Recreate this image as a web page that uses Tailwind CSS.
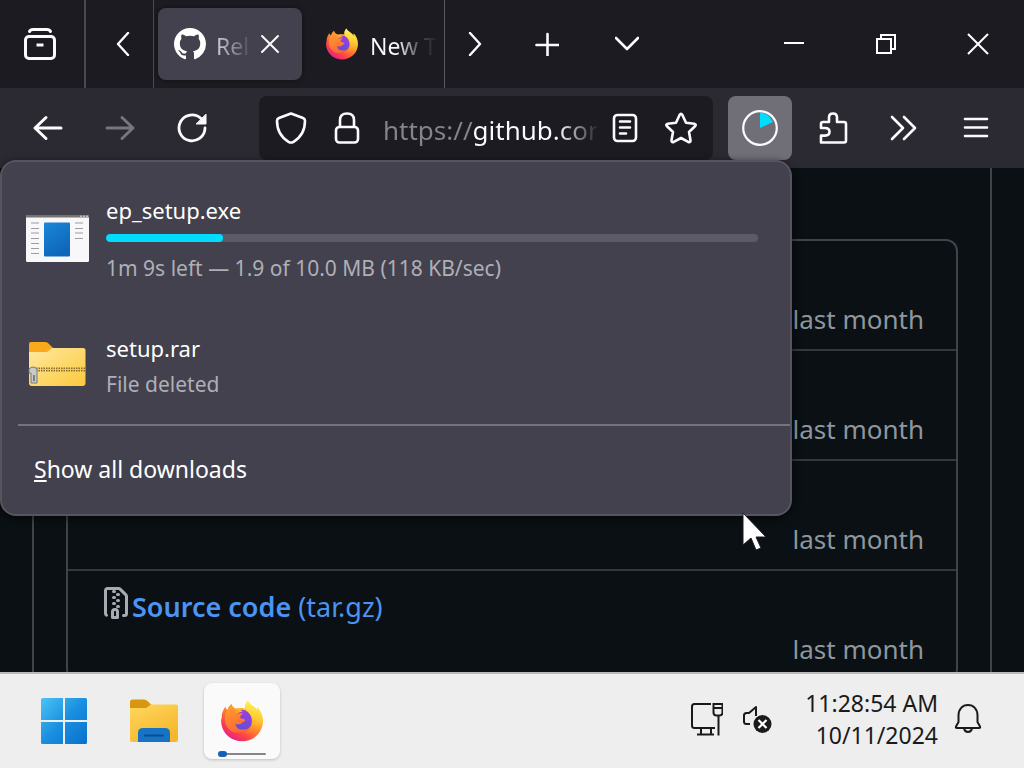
<!DOCTYPE html>
<html lang="en">
<head>
<meta charset="utf-8">
<meta name="viewport" content="width=device-width, initial-scale=1">
<title>Downloads</title>
<script src="https://cdn.jsdelivr.net/npm/@tailwindcss/browser@4"></script>
</head>
<body class="flex h-screen flex-col overflow-hidden bg-[#0a1013] font-['Noto_Sans','Open_Sans',sans-serif] text-white">

<!-- Shared logo symbol -->
<svg class="absolute size-0" aria-hidden="true">
  <defs>
    <linearGradient id="fxBody" x1="0.85" y1="0.1" x2="0.25" y2="0.95">
      <stop offset="0" stop-color="#fff04a"/><stop offset=".3" stop-color="#ffb52e"/><stop offset=".55" stop-color="#ff7a2a"/><stop offset=".8" stop-color="#fb3f4c"/><stop offset="1" stop-color="#e6218c"/>
    </linearGradient>
    <linearGradient id="fxFlame" x1="0.6" y1="0" x2="0.5" y2="1">
      <stop offset="0" stop-color="#fff35a"/><stop offset=".5" stop-color="#ffcf33"/><stop offset="1" stop-color="#ff8a2b" stop-opacity="0.2"/>
    </linearGradient>
    <linearGradient id="fxGlobe" x1="0.7" y1="0" x2="0.3" y2="1">
      <stop offset="0" stop-color="#a23ce0"/><stop offset=".5" stop-color="#7a47e0"/><stop offset="1" stop-color="#5f4fd0"/>
    </linearGradient>
    <linearGradient id="fxHead" x1="0.2" y1="0" x2="0.6" y2="1">
      <stop offset="0" stop-color="#ffa02e"/><stop offset="1" stop-color="#ff6436"/>
    </linearGradient>
    <symbol id="firefox" viewBox="0 0 64 64">
      <path fill="url(#fxBody)" d="M41 1c-4 4-5 8-4 12-4-1-9-1-13 0-4-1-7-3-8-7-3 2-5 6-6 9-2-1-3-3-3-5-4 5-6 11-6 17C0 30 0 34 1 39c3 14 16 24 31 24 18 0 32-14 32-31 0-9-4-17-9-21 0 2 1 4 1 6C52 9 44 8 41 1Z"/>
      <path fill="url(#fxFlame)" d="M41 1c-4 4-5 9-3 13 3 5 9 8 10 16 1 9-4 16-13 20 12 4 25-4 27-18 0-9-3-17-7-21 0 2 1 4 1 6C52 9 44 8 41 1Z"/>
      <path fill="url(#fxGlobe)" d="M20 32c0-8 6-14 13-14l-3-3c8-1 17 6 17 17 0 9-6 14-14 14s-13-6-13-14Z"/>
      <path fill="url(#fxHead)" d="M16 6c-3 2-5 6-6 10-3 3-4 8-4 14 0 10 8 19 18 20 6 0 12-2 15-6-8 3-16 0-17-8 4 2 8 1 10-1 2-2 5-2 5-4s-4-3-7-3c-2-2 0-5 4-7-4-1-7-1-10 1-2-1-4-1-6 0 1-2 3-4 5-5-4-2-6-6-7-11Z"/>
    </symbol>
  </defs>
</svg>

<!-- Tab strip -->
<header class="flex h-22 shrink-0 items-stretch bg-[#1c1b22]">
  <button class="flex w-20 items-center justify-center" aria-label="Recent browsing">
    <svg class="size-8" viewBox="0 0 32 32" fill="none" stroke="#fbfbfe" stroke-width="3" stroke-linecap="round" stroke-linejoin="round"><rect x="1.500" y="8.500" width="29" height="22" rx="3.500"/><path d="M5.500 3.500Q6.500 1.500 9 1.500h14q2.500 0 3.500 2"/><path d="M12.500 17h7" stroke-linecap="butt"/></svg>
  </button>
  <div class="ml-1 flex border-r border-l-2 border-[#4a4952]">
    <button class="flex w-[67px] items-center justify-center pl-1.5" aria-label="Scroll tabs left">
      <svg class="h-6 w-4" viewBox="0 0 16 24" fill="none" stroke="#fbfbfe" stroke-width="2.400" stroke-linecap="round" stroke-linejoin="round"><path d="M13 1 3 12l10 11"/></svg>
    </button>
  </div>
  <nav class="flex items-stretch border-r border-[#5a5962]" aria-label="Tabs">
    <div class="my-2 ml-1 flex w-36 items-center rounded-lg bg-[#42414d] pl-4 shadow-[0_0_4px_rgba(0,0,0,0.5)]">
      <svg class="size-8 shrink-0" viewBox="0 0 16 16" fill="#fff"><path d="M8 0C3.580 0 0 3.580 0 8c0 3.540 2.290 6.530 5.470 7.590.4.070.55-.17.55-.38 0-.19-.01-.82-.01-1.490-2.010.37-2.530-.49-2.690-.94-.09-.23-.48-.94-.82-1.130-.28-.15-.68-.52-.01-.53.63-.01 1.080.58 1.230.82.72 1.210 1.870.87 2.330.66.07-.52.28-.87.51-1.070-1.780-.2-3.640-.89-3.640-3.950 0-.87.31-1.590.82-2.150-.08-.2-.36-1.020.08-2.120 0 0 .67-.21 2.200.82.64-.18 1.320-.27 2-.27.68 0 1.360.09 2 .27 1.530-1.040 2.200-.82 2.200-.82.44 1.100.16 1.920.08 2.120.51.56.82 1.270.82 2.150 0 3.070-1.870 3.750-3.650 3.950.29.25.54.73.54 1.480 0 1.070-.01 1.930-.01 2.200 0 .21.15.46.55.38A8.013 8.013 0 0 0 16 8c0-4.420-3.580-8-8-8z"/></svg>
      <a href="#releases" class="ml-2.5 w-9 overflow-hidden bg-[linear-gradient(90deg,#d0d0d4,#6b6a75_75%,#42414d)] bg-clip-text pt-1 text-[23px] leading-8 whitespace-nowrap text-transparent">Releases</a>
      <button class="ml-1.5 flex size-6 items-center justify-center" aria-label="Close tab">
        <svg class="size-5" viewBox="0 0 20 20" stroke="#fbfbfe" stroke-width="2" stroke-linecap="round"><path d="m2 2 16 16M18 2 2 18"/></svg>
      </button>
    </div>
    <a href="#newtab" class="flex w-[142px] items-center pl-6">
      <svg class="size-8 shrink-0"><use href="#firefox"/></svg>
      <span class="ml-3 w-17 overflow-hidden bg-[linear-gradient(90deg,#fbfbfe_40%,#55545d_72%,#1c1b22)] bg-clip-text pt-1 text-[23px] leading-8 whitespace-nowrap text-transparent">New Tab</span>
    </a>
  </nav>
  <button class="flex w-15 items-center justify-center" aria-label="Scroll tabs right">
    <svg class="h-6 w-4" viewBox="0 0 16 24" fill="none" stroke="#fbfbfe" stroke-width="2.400" stroke-linecap="round" stroke-linejoin="round"><path d="m3 1 10 11L3 23"/></svg>
  </button>
  <button class="ml-0.5 flex w-20 items-center justify-center" aria-label="New tab">
    <svg class="size-6" viewBox="0 0 24 24" stroke="#fbfbfe" stroke-width="2.600" stroke-linecap="round"><path d="M1.500 13h22M12.500 2v22"/></svg>
  </button>
  <button class="flex w-20 items-center justify-center" aria-label="List all tabs">
    <svg class="h-4 w-6" viewBox="0 0 24 16" fill="none" stroke="#fbfbfe" stroke-width="2.600" stroke-linecap="round" stroke-linejoin="round"><path d="m1 2 11 11L23 2"/></svg>
  </button>
  <div class="ml-auto flex">
    <button class="flex w-23 items-center justify-center" aria-label="Minimize"><svg class="size-5" viewBox="0 0 20 20" stroke="#fff" stroke-width="2"><path d="M0 9h20"/></svg></button>
    <button class="flex w-23 items-center justify-center" aria-label="Restore"><svg class="size-5" viewBox="0 0 20 20" fill="none" stroke="#fff" stroke-width="2"><path d="M1 5h14v14H1zM5 5V1h14v14h-4"/></svg></button>
    <button class="flex w-23 items-center justify-center" aria-label="Close"><svg class="size-6" viewBox="0 0 24 24" stroke="#fff" stroke-width="2"><path d="m2 2 20 20M22 2 2 22"/></svg></button>
  </div>
</header>

<!-- Navigation toolbar -->
<div class="relative z-10 flex h-20 shrink-0 items-center bg-[#2b2a33] px-3">
  <button class="flex w-18 justify-center" aria-label="Back"><svg class="size-8" viewBox="0 0 32 32" fill="none" stroke="#fbfbfe" stroke-width="3" stroke-linecap="round" stroke-linejoin="round"><path d="M29 16H3M14 5.500 3 16l11 10.500"/></svg></button>
  <button class="flex w-18 justify-center" aria-label="Forward" disabled><svg class="size-8" viewBox="0 0 32 32" fill="none" stroke="#77767e" stroke-width="3" stroke-linecap="round" stroke-linejoin="round"><path d="M3 16h26M18 5.500 29 16 18 26.500"/></svg></button>
  <button class="flex w-18 justify-center" aria-label="Reload"><svg class="size-8" viewBox="0 0 32 32" fill="none" stroke="#fbfbfe" stroke-width="2.800" stroke-linecap="round"><path d="M29 16A13 13 0 1 1 25 6.500"/><path d="M30 2.500V12h-9.500z" fill="#fbfbfe" stroke-width="1" stroke-linejoin="round"/></svg></button>
  <div class="mr-[11px] ml-[31px] flex h-16 min-w-0 flex-1 items-center rounded-lg bg-[#1c1b22] px-1">
    <button class="flex w-14 shrink-0 justify-center" aria-label="Tracking protection"><svg class="size-8" viewBox="0 0 32 32" fill="none" stroke="#fbfbfe" stroke-width="2.600" stroke-linejoin="round"><path d="M16 1.500 28 6q2 .8 2 2.800c0 9.700-3.500 16.200-11.500 21q-2.500 1.500-5 0C5.500 25 2 18.500 2 8.800Q2 6.800 4 6Z"/></svg></button>
    <button class="flex w-14 shrink-0 justify-center" aria-label="Connection secure"><svg class="size-8" viewBox="0 0 32 32" fill="none" stroke="#fbfbfe" stroke-width="2.600"><rect x="5" y="15" width="22" height="15.500" rx="3.500"/><path d="M9 15V8q0-6.500 7-6.500T23 8v7"/></svg></button>
    <input type="text" aria-label="Address" value="https://github.com/valinet/ExplorerPatcher/releases" class="ml-2 min-w-0 flex-1 bg-[linear-gradient(90deg,#85848b_90px,#fbfbfe_90px,#fbfbfe_175px,#1c1b22_216px)] bg-clip-text pt-1 text-[26px] leading-9 text-transparent outline-none">
    <button class="flex w-14 shrink-0 justify-center" aria-label="Reader view"><svg class="size-8" viewBox="0 0 32 32" fill="none" stroke="#fbfbfe" stroke-width="2.600" stroke-linecap="round"><rect x="5" y="3" width="22" height="26" rx="3.500"/><path d="M11 9.500h10M11 15.500h10M11 21.500h6"/></svg></button>
    <button class="flex w-14 shrink-0 justify-center" aria-label="Bookmark this page"><svg class="size-8" viewBox="0 0 32 32" fill="none" stroke="#fbfbfe" stroke-width="2.600" stroke-linejoin="round"><path d="M14.600 3q1.400-2.400 2.800 0l3.600 7.800 8.200 1q2.500.6.8 2.500L24 20l1.500 8.200q.1 2.500-2.300 1.700L16 26l-7.200 3.900q-2.400.8-2.300-1.700L8 20l-6-5.700q-1.700-1.900.8-2.500l8.200-1Z"/></svg></button>
  </div>
  <button class="mx-1 flex size-16 items-center justify-center rounded-lg bg-[#706f78]" aria-label="Downloads"><svg class="size-9" viewBox="0 0 36 36"><path d="M18 18V2.500q8 0 13 9.500Z" fill="#00ddff"/><circle cx="18" cy="18" r="16.800" fill="none" stroke="#fbfbfe" stroke-width="2.200"/></svg></button>
  <button class="flex w-18 justify-center" aria-label="Extensions"><svg class="size-8" viewBox="0 0 32 32" fill="none" stroke="#fbfbfe" stroke-width="2.600" stroke-linejoin="round"><path d="M5 30.500h23q2 0 2-2V12q0-2-2-2h-7V5.500q0-4-4-4t-4 4V10H7q-2 0-2 2v4h4q4.500 0 4.500 3.800T9 23.600H5Z"/></svg></button>
  <button class="flex w-18 justify-center" aria-label="More tools"><svg class="size-8" viewBox="0 0 32 32" fill="none" stroke="#fbfbfe" stroke-width="2.600" stroke-linecap="round" stroke-linejoin="round"><path d="m4 5 11 11L4 27M16 5l11 11-11 11"/></svg></button>
  <button class="flex w-18 justify-center" aria-label="Application menu"><svg class="size-8" viewBox="0 0 32 32" stroke="#fbfbfe" stroke-width="2.600" stroke-linecap="round"><path d="M5 7h22M5 15.500h22M5 24h22"/></svg></button>

  <!-- Downloads panel -->
  <section class="absolute top-18 left-0 w-[calc(100%-232px)] rounded-2xl border-2 border-[#56555f] bg-[#42414d] pb-0.5 shadow-[0_2px_8px_rgba(0,0,0,0.6)]" aria-label="Downloads">
    <ul class="mt-8 mr-8 mb-6 ml-6 flex flex-col gap-12">
      <li class="flex items-center gap-4">
        <svg class="h-12 w-16 shrink-0" viewBox="1 1 64 48"><defs><linearGradient id="exe" x1="0" y1="0" x2="0.5" y2="1"><stop offset="0" stop-color="#1a86d9"/><stop offset="1" stop-color="#0f66b8"/></linearGradient></defs><rect x="1" y="1" width="63" height="47" rx="1.500" fill="#f8f8fa"/><path d="M1 1h63v2.500H1z" fill="#77736f"/><path d="M55 2.200h8" stroke="#ddd" stroke-width="1" stroke-dasharray="2 1"/><rect x="19" y="8.500" width="26" height="34" rx="1" fill="url(#exe)"/><path d="M6 9h8M6 14.500h8M6 19h8M6 24.500h8M6 29.500h8M6 34.500h8M6 39.500h8M50 9h8M50 14.500h8M50 19h8M50 24.500h8" stroke="#9b9ba0" stroke-width="1.200"/></svg>
        <div class="min-w-0 flex-1">
          <p class="text-[22px] leading-8">ep_setup.exe</p>
          <div class="mt-2 mb-2.5 h-2 overflow-hidden rounded-full bg-[#5b5a66]" role="progressbar" aria-label="ep_setup.exe" aria-valuenow="18" aria-valuemin="0" aria-valuemax="100"><div class="h-full rounded-full bg-[#00ddff]" style="width:18%"></div></div>
          <p class="text-[21px] leading-8 text-[#afafb6]">1m 9s left — 1.9 of 10.0 MB (118 KB/sec)</p>
        </div>
      </li>
      <li class="flex items-center gap-4">
        <svg class="size-16 shrink-0" viewBox="1 2 64 64"><defs><linearGradient id="zip" x1="0" y1="0" x2="1" y2="1"><stop offset="0" stop-color="#ffe9a0"/><stop offset="1" stop-color="#fbc93c"/></linearGradient></defs><path d="M4 12q0-2 2-2h14q2 0 3 1l5 5v6H4Z" fill="#f8a91c"/><path d="M4 20h18l5-4h31q2.500 0 2.500 2.500V51q0 3-3 3H7q-3 0-3-3Z" fill="url(#zip)"/><path d="M11 37.500h49" stroke="#8a6a28" stroke-width="4" stroke-dasharray="1.500 1"/><path d="M11 37.500h49" stroke="#d9c690" stroke-width="1"/><path d="M4 37q4-4 8 0v14H6V41H4Z" fill="#c9c9c9" stroke="#777" stroke-width="1"/><path d="M9 43v6" stroke="#666" stroke-width="1.500"/></svg>
        <div class="min-w-0 flex-1">
          <p class="text-[22px] leading-8">setup.rar</p>
          <p class="mt-1 text-[21px] leading-8 text-[#afafb6]">File deleted</p>
        </div>
      </li>
    </ul>
    <hr class="ml-4 border-t-2 border-[#73727e]">
    <button class="flex h-[86px] w-full items-center pl-8 text-[23px]"><span><span class="underline decoration-2 underline-offset-2">S</span>how all downloads</span></button>
  </section>

  <!-- Mouse pointer -->
  <svg class="pointer-events-none absolute top-[424px] left-[742px] h-10 w-6" viewBox="0 0 24 40" aria-hidden="true"><path d="M1 1v32l8-7 5 12 5-2-5-11h10Z" fill="#fff" stroke="#1c1b22" stroke-width="1"/></svg>
</div>

<!-- Release assets page -->
<main class="min-h-0 flex-1 overflow-hidden">
  <div class="mx-8 border-x-2 border-[#3d444d] px-8 pt-[71px] pb-8 text-[26px] leading-9">
    <ul class="divide-y-2 divide-[#33393f] rounded-xl border-2 border-[#3d444d] text-[#8f969e]">
      <li class="flex h-[110px] items-end justify-end px-8 pb-3"><time>last month</time></li>
      <li class="flex h-[110px] items-end justify-end px-8 pb-3"><time>last month</time></li>
      <li class="flex h-[110px] items-end justify-end px-8 pb-3"><time>last month</time></li>
      <li class="flex h-[108px] flex-col justify-between px-8 pt-4 pb-3">
        <a href="#source" class="flex items-start self-start text-[27px] leading-10 text-[#4c93f2]">
          <svg class="size-8" viewBox="0 0 16 16" fill="#a5acb3"><path d="M3.500 1.750v11.500c0 .09.048.173.126.217a.75.75 0 0 1-.752 1.298A1.748 1.748 0 0 1 2 13.250V1.750C2 .784 2.784 0 3.750 0h5.586c.464 0 .909.185 1.237.513l2.914 2.914c.329.328.513.773.513 1.237v8.586A1.750 1.750 0 0 1 12.250 15h-.5a.75.75 0 0 1 0-1.500h.5a.25.25 0 0 0 .25-.25V4.664a.25.25 0 0 0-.073-.177L9.513 1.573a.25.25 0 0 0-.177-.073H7.250a.75.75 0 0 1 0 1.500h-.5a.75.75 0 0 1 0-1.500h-3a.25.25 0 0 0-.25.25Zm3.750 8.750h.5c.966 0 1.750.784 1.750 1.750v3a.75.75 0 0 1-.75.75h-2.500a.75.75 0 0 1-.75-.75v-3c0-.966.784-1.750 1.750-1.750ZM6 5.250a.75.75 0 0 1 .75-.75h.5a.75.75 0 0 1 0 1.500h-.5A.75.75 0 0 1 6 5.250Zm.75 2.250h.5a.75.75 0 0 1 0 1.500h-.5a.75.75 0 0 1 0-1.500ZM8 6.750A.75.75 0 0 1 8.750 6h.5a.75.75 0 0 1 0 1.500h-.5A.75.75 0 0 1 8 6.750ZM8.750 3h.5a.75.75 0 0 1 0 1.500h-.5a.75.75 0 0 1 0-1.500ZM8 9.750A.75.75 0 0 1 8.750 9h.5a.75.75 0 0 1 0 1.500h-.5A.75.75 0 0 1 8 9.750Zm-1 2.500v2.250h1v-2.250a.25.25 0 0 0-.25-.25h-.5a.25.25 0 0 0-.25.25Z"/></svg>
          <span><span class="font-semibold">Source code</span> (tar.gz)</span>
        </a>
        <time class="self-end">last month</time>
      </li>
    </ul>
  </div>
</main>

<!-- Taskbar -->
<footer class="relative flex h-24 shrink-0 items-center border-t-2 border-[#b9bab9] bg-[#eeeeee] text-[#1a1a1a]">
  <button class="ml-[26px] flex size-19 items-center justify-center" aria-label="Start"><svg class="size-[46px]" viewBox="0 0 46 46"><defs><linearGradient id="win" gradientUnits="userSpaceOnUse" x1="0" y1="0" x2="46" y2="46"><stop offset="0" stop-color="#4cc3f5"/><stop offset=".5" stop-color="#1a8fe0"/><stop offset="1" stop-color="#0a6fca"/></linearGradient></defs><path fill="url(#win)" d="M1.500 0H22v22H0V1.500Q0 0 1.500 0ZM24 0h20.500Q46 0 46 1.500V22H24ZM0 24h22v22H1.500Q0 46 0 44.500ZM24 24h22v20.500q0 1.500-1.500 1.500H24Z"/></svg></button>
  <button class="ml-[14px] flex size-19 items-center justify-center" aria-label="File Explorer"><svg class="size-12" viewBox="0 0 48 48"><defs><linearGradient id="fold" x1="0" y1="0" x2="0.6" y2="1"><stop offset="0" stop-color="#ffd75e"/><stop offset="1" stop-color="#f5b72c"/></linearGradient></defs><path d="M0 5q0-2.500 2.500-2.500H14q2 0 3.500 1.500l4 4v6H0Z" fill="#d9960f"/><path d="M0 11h16l5-3.500h25q2 0 2 2V43q0 2-2 2H2q-2 0-2-2Z" fill="url(#fold)"/><path d="M8 45V36q0-5 5-5h22q5 0 5 5v9Z" fill="#1773c4"/><path d="M15 38.500h18" stroke="#0b4f8e" stroke-width="2" stroke-linecap="round"/></svg></button>
  <button class="relative ml-3 flex size-19 items-center justify-center rounded-lg bg-[#fafafa] shadow-[0_1px_3px_rgba(0,0,0,0.2)]" aria-label="Firefox">
    <svg class="size-[42px]"><use href="#firefox"/></svg>
    <span class="absolute bottom-1 left-4 h-[2px] w-[46px] rounded-full bg-[#85858a]"></span>
    <span class="absolute bottom-[2px] left-[14px] h-[6px] w-[9px] rounded-full bg-[#1560b3]"></span>
  </button>
  <div class="mr-[42px] mb-1 ml-auto flex items-center">
    <button aria-label="Network"><svg class="h-9 w-8" viewBox="0 0 32 36" fill="none" stroke="#1a1a1a" stroke-width="2"><path d="M20 3H3.500Q1 3 1 5.500v19Q1 27 3.500 27H24M10 27v6M20 27v6M6 33.500h17M27.500 15v19.500"/><path d="M22.500 3h9v8.500q0 3-3 3h-3q-3 0-3-3ZM22.500 7h9"/></svg></button>
    <button class="ml-5" aria-label="Volume muted"><svg class="size-[30px]" viewBox="0 0 30 30"><path d="M7 20H3.500Q1 20 1 17.500v-6Q1 9 3.500 9H6l7-6v9" fill="none" stroke="#1a1a1a" stroke-width="2" stroke-linejoin="round"/><circle cx="19.500" cy="20" r="9" fill="#1a1a1a"/><path d="m15.500 16 8 8M23.500 16l-8 8" stroke="#fff" stroke-width="2.200"/></svg></button>
    <button class="ml-8 text-right text-[23px] leading-8"><time class="block">11:28:54 AM</time><time class="block">10/11/2024</time></button>
    <button class="ml-4" aria-label="Notifications"><svg class="h-8 w-7" viewBox="0 0 28 32" fill="none" stroke="#1a1a1a" stroke-width="2" stroke-linejoin="round"><path d="M4.500 12.500C4.500 6 8.500 2 14 2s9.500 4 9.500 10.500V19l2.500 4.500q.6 1.500-1 1.500H3q-1.600 0-1-1.500L4.500 19Z"/><path d="M10 25.500q.8 3.500 4 3.500t4-3.500"/></svg></button>
  </div>
</footer>
</body>
</html>
